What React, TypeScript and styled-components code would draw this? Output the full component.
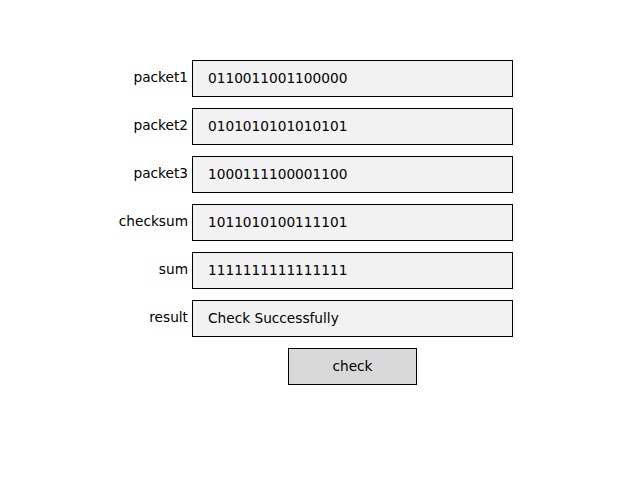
import React from "react";
import styled, { createGlobalStyle } from "styled-components";

const Global = createGlobalStyle`
  html, body { margin: 0; padding: 0; background: #ffffff; }
  body { font-family: "DejaVu Sans", sans-serif; font-size: 13.7px; color: #000; }
`;

const Form = styled.div`
  display: grid;
  grid-template-columns: 192px 321px;
  row-gap: 11px;
  padding-top: 60px;
  align-items: center;
`;

const Label = styled.div`
  text-align: right;
  padding-right: 4px;
  padding-bottom: 2px;
  line-height: 35px;
`;

const Field = styled.div`
  box-sizing: border-box;
  height: 37px;
  border: 1px solid #000;
  background: #f2f2f2;
  padding: 0 0 2px 15px;
  display: flex;
  align-items: center;
`;

const Button = styled.button`
  grid-column: 2;
  justify-self: center;
  box-sizing: border-box;
  width: 129px;
  height: 37px;
  border: 1px solid #000;
  background: #d9d9d9;
  font-family: "DejaVu Sans", sans-serif;
  font-size: 13.7px;
  color: #000;
  padding: 0 0 2px 0;
  border-radius: 0;
`;

const rows: [string, string][] = [
  ["packet1", "0110011001100000"],
  ["packet2", "0101010101010101"],
  ["packet3", "1000111100001100"],
  ["checksum", "1011010100111101"],
  ["sum", "1111111111111111"],
  ["result", "Check Successfully"],
];

export default function App() {
  return (
    <>
      <Global />
      <Form>
        {rows.map(([l, v]) => (
          <React.Fragment key={l}>
            <Label>{l}</Label>
            <Field>{v}</Field>
          </React.Fragment>
        ))}
        <Button>check</Button>
      </Form>
    </>
  );
}
